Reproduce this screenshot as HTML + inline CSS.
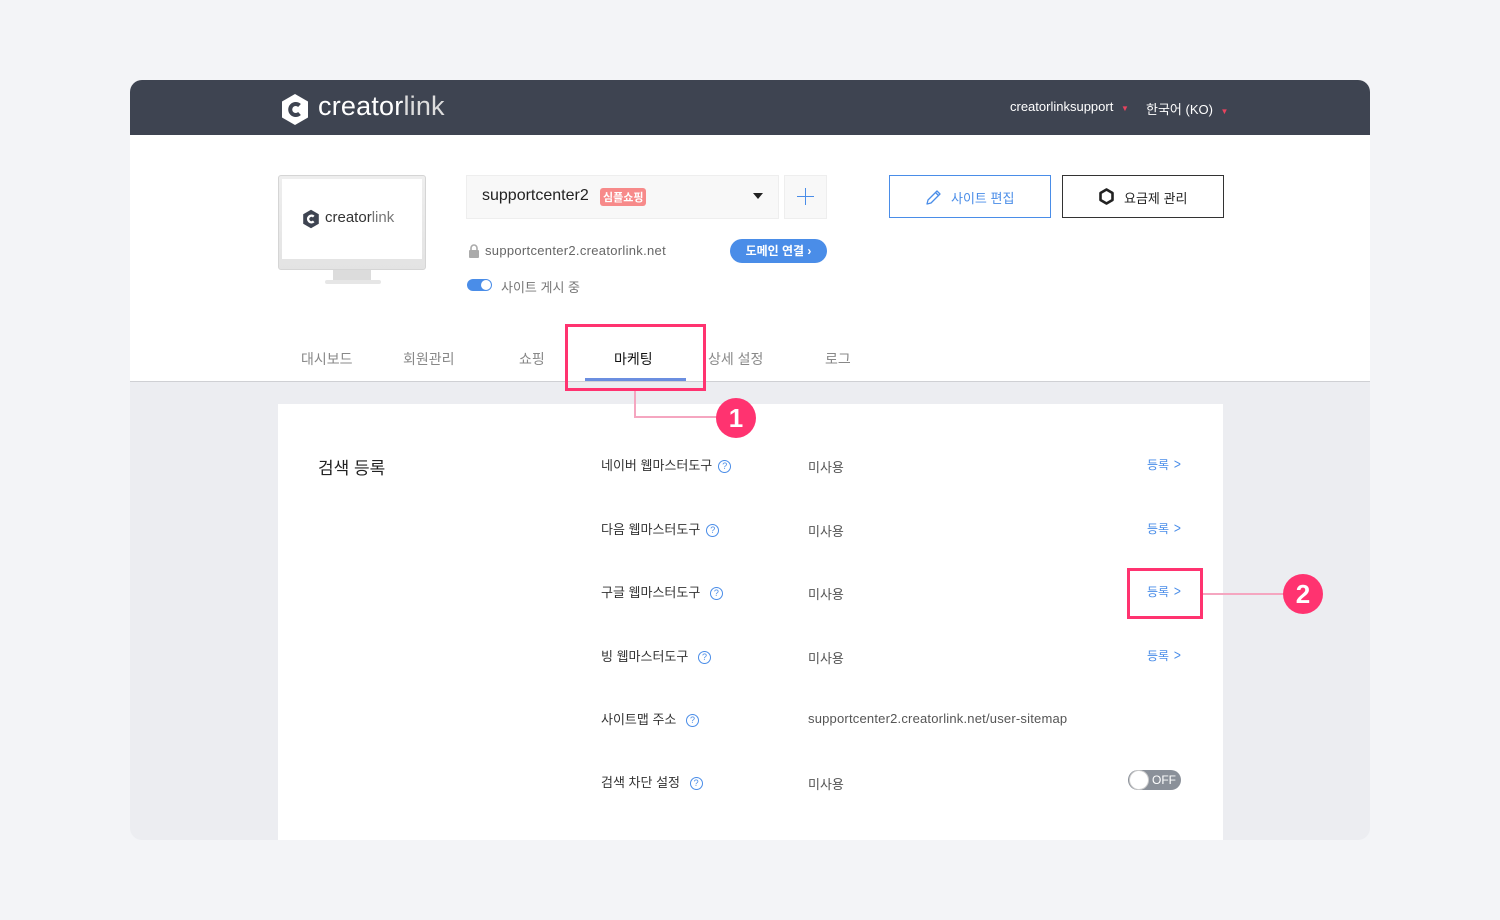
<!DOCTYPE html>
<html><head><meta charset="utf-8"><style>
*{margin:0;padding:0;box-sizing:border-box}
body{width:1500px;height:920px;background:#f3f4f7;font-family:"Liberation Sans","Noto Sans CJK KR",sans-serif;position:relative;overflow:hidden;color:#333}
.a{position:absolute}
.card{left:130px;top:80px;width:1240px;height:760px;border-radius:12px;overflow:hidden;background:#ecedf1}
.hd{left:0;top:0;width:1240px;height:55px;background:#3e4451}
.wt{left:0;top:55px;width:1240px;height:247px;background:#fff;border-bottom:1px solid #cfd0d4}
.t{white-space:nowrap}
.row{font-size:13px;color:#333}
.q{display:inline-block;width:13px;height:13px;border:1px solid #4a8de8;border-radius:50%;color:#4a8de8;font-size:9px;text-align:center;line-height:11px;margin-left:6px;vertical-align:1px}
.val{font-size:13px;color:#555}
.reg{font-size:12px;color:#4a8de8}
.reg b{font-weight:normal;font-size:15px;margin-left:4px;display:inline-block;transform:scaleX(0.8)}
</style></head><body>
<div class="a card">
 <div class="a hd"></div>
 <div class="a wt"></div>
</div>
<svg class="a" style="left:280px;top:93px" width="30" height="33" viewBox="0 0 30 33"><path d="M15 1 L28 8.5 V24.5 L15 32 L2 24.5 V8.5Z" fill="#fff"/><path d="M19.5 12.5 A5.5 5.5 0 1 0 19.5 20.5" stroke="#3e4451" stroke-width="4" fill="none"/></svg>
<div class="a t" style="left:318px;top:91px;font-size:27px;color:#fff;letter-spacing:0.2px">creator<span style="font-weight:300;color:#ddd">link</span></div>
<div class="a t" style="left:1010px;top:99px;font-size:13px;color:#fff">creatorlinksupport <span style="color:#e8435e;font-size:8px;margin-left:4px">▼</span></div>
<div class="a t" style="left:1146px;top:99px;font-size:13px;color:#fff">한국어 (KO) <span style="color:#e8435e;font-size:8px;margin-left:4px">▼</span></div>
<div class="a" style="left:278px;top:175px;width:148px;height:95px;border:1px solid #d5d5d5;border-radius:3px;background:linear-gradient(#eee,#e3e3e3)"></div>
<div class="a" style="left:282px;top:179px;width:140px;height:80px;background:#fff"></div>
<div class="a" style="left:333px;top:270px;width:38px;height:10px;background:#dcdcdc"></div>
<div class="a" style="left:325px;top:280px;width:56px;height:4px;background:#e6e6e6;border-radius:2px"></div>
<svg class="a" style="left:302px;top:209px" width="18" height="20" viewBox="0 0 30 33"><path d="M15 1 L28 8.5 V24.5 L15 32 L2 24.5 V8.5Z" fill="#3e4451"/><path d="M19.5 12.5 A5.5 5.5 0 1 0 19.5 20.5" stroke="#fff" stroke-width="4" fill="none"/></svg>
<div class="a t" style="left:325px;top:209px;font-size:15px;color:#333">creator<span style="color:#777">link</span></div>
<div class="a" style="left:466px;top:175px;width:313px;height:44px;background:#f8f8f8;border:1px solid #eee"></div>
<div class="a t" style="left:482px;top:187px;font-size:16px;color:#222">supportcenter2</div>
<div class="a t" style="left:600px;top:188px;font-size:11px;color:#fff;background:#f78a8a;border-radius:3px;padding:1px 3px;font-weight:bold">심플쇼핑</div>
<div class="a" style="left:753px;top:193px;width:0;height:0;border-left:5px solid transparent;border-right:5px solid transparent;border-top:6px solid #222"></div>
<div class="a" style="left:784px;top:175px;width:43px;height:44px;background:#f8f8f8;border:1px solid #eee"></div>
<div class="a" style="left:797px;top:196px;width:17px;height:1px;background:#4a8de8"></div>
<div class="a" style="left:805px;top:188px;width:1px;height:17px;background:#4a8de8"></div>
<svg class="a" style="left:468px;top:244px" width="12" height="14" viewBox="0 0 12 14"><path d="M3 6V4a3 3 0 0 1 6 0v2" stroke="#aaa" stroke-width="1.6" fill="none"/><rect x="1" y="6" width="10" height="8" rx="1" fill="#aaa"/></svg>
<div class="a t" style="left:485px;top:243px;font-size:13px;color:#666;letter-spacing:0.3px">supportcenter2.creatorlink.net</div>
<div class="a t" style="left:730px;top:239px;width:97px;height:24px;border-radius:12px;background:#4a8de8;color:#fff;font-size:12px;font-weight:bold;text-align:center;line-height:24px">도메인 연결 ›</div>
<div class="a" style="left:467px;top:279px;width:25px;height:12px;border-radius:6px;background:#4a8de8"></div>
<div class="a" style="left:481px;top:280px;width:10px;height:10px;border-radius:5px;background:#fff"></div>
<div class="a t" style="left:501px;top:277px;font-size:13px;color:#777">사이트 게시 중</div>
<div class="a" style="left:889px;top:175px;width:162px;height:43px;border:1px solid #4a8de8"></div>
<svg class="a" style="left:925px;top:188px" width="18" height="18" viewBox="0 0 18 18"><path d="M2 16 L3 12 L12 3 L15 6 L6 15 Z M10.5 4.5 L13.5 7.5" stroke="#4a8de8" stroke-width="1.3" fill="none" stroke-linejoin="round"/></svg>
<div class="a t" style="left:951px;top:188px;font-size:13px;color:#4a8de8">사이트 편집</div>
<div class="a" style="left:1062px;top:175px;width:162px;height:43px;border:1px solid #333"></div>
<svg class="a" style="left:1098px;top:188px" width="17" height="17" viewBox="0 0 17 17"><path d="M8.5 1.5 L14.5 5 V12 L8.5 15.5 L2.5 12 V5Z" stroke="#222" stroke-width="2.6" fill="none" stroke-linejoin="round"/></svg>
<div class="a t" style="left:1124px;top:188px;font-size:13px;color:#222">요금제 관리</div>
<div class="a t" style="left:301px;top:349px;font-size:14px;color:#888">대시보드</div>
<div class="a t" style="left:403px;top:349px;font-size:14px;color:#888">회원관리</div>
<div class="a t" style="left:519px;top:349px;font-size:14px;color:#888">쇼핑</div>
<div class="a t" style="left:614px;top:349px;font-size:14px;color:#111">마케팅</div>
<div class="a t" style="left:708px;top:349px;font-size:14px;color:#888">상세 설정</div>
<div class="a t" style="left:825px;top:349px;font-size:14px;color:#888">로그</div>
<div class="a" style="left:585px;top:378px;width:101px;height:3px;background:#6b8ee0"></div>
<div class="a" style="left:278px;top:404px;width:945px;height:436px;background:#fff"></div>
<div class="a t" style="left:318px;top:454px;font-size:17px;color:#222">검색 등록</div>
<div class="a t row" style="left:601px;top:455px">네이버 웹마스터도구<span class="q">?</span></div>
<div class="a t row" style="left:601px;top:519px">다음 웹마스터도구<span class="q">?</span></div>
<div class="a t row" style="left:601px;top:582px">구글 웹마스터도구 <span class="q">?</span></div>
<div class="a t row" style="left:601px;top:646px">빙 웹마스터도구 <span class="q">?</span></div>
<div class="a t row" style="left:601px;top:709px">사이트맵 주소 <span class="q">?</span></div>
<div class="a t row" style="left:601px;top:772px">검색 차단 설정 <span class="q">?</span></div>
<div class="a t val" style="left:808px;top:457px">미사용</div>
<div class="a t val" style="left:808px;top:521px">미사용</div>
<div class="a t val" style="left:808px;top:584px">미사용</div>
<div class="a t val" style="left:808px;top:648px">미사용</div>
<div class="a t val" style="left:808px;top:711px;letter-spacing:0.2px">supportcenter2.creatorlink.net/user-sitemap</div>
<div class="a t val" style="left:808px;top:774px">미사용</div>
<div class="a t reg" style="left:1147px;top:456px">등록<b>&gt;</b></div>
<div class="a t reg" style="left:1147px;top:520px">등록<b>&gt;</b></div>
<div class="a t reg" style="left:1147px;top:583px">등록<b>&gt;</b></div>
<div class="a t reg" style="left:1147px;top:647px">등록<b>&gt;</b></div>
<div class="a" style="left:1128px;top:770px;width:53px;height:20px;border-radius:10px;background:#8a9099;color:#fff;font-size:12px;line-height:20px;padding-left:24px">OFF</div>
<div class="a" style="left:1129px;top:770px;width:20px;height:20px;border-radius:10px;background:#fff;border:1px solid #ccc"></div>
<div class="a" style="left:565px;top:324px;width:141px;height:67px;border:3px solid #ff3370"></div>
<div class="a" style="left:634px;top:391px;width:2px;height:27px;background:#f5a6c0"></div>
<div class="a" style="left:634px;top:416px;width:86px;height:2px;background:#f5a6c0"></div>
<div class="a" style="left:716px;top:398px;width:40px;height:40px;border-radius:20px;background:#ff3370;color:#fff;font-size:26px;font-weight:bold;text-align:center;line-height:40px">1</div>
<div class="a" style="left:1127px;top:568px;width:76px;height:51px;border:3px solid #ff3370"></div>
<div class="a" style="left:1203px;top:593px;width:84px;height:2px;background:#f5a6c0"></div>
<div class="a" style="left:1283px;top:574px;width:40px;height:40px;border-radius:20px;background:#ff3370;color:#fff;font-size:26px;font-weight:bold;text-align:center;line-height:40px">2</div>
</body></html>
